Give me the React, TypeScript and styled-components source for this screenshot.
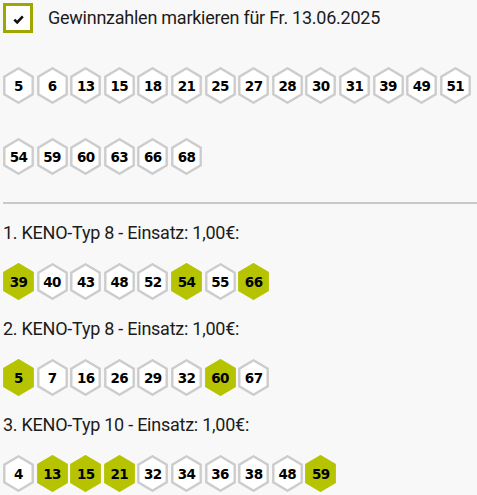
import React from "react";
import styled, { createGlobalStyle } from "styled-components";

const GlobalStyle = createGlobalStyle`
  html, body {
    margin: 0;
    padding: 0;
    background: #f8f8f8;
  }
  body {
    font-family: Roboto, "Noto Sans", sans-serif;
    color: #1c1c1c;
  }
`;

const Page = styled.div`
  display: flex;
  flex-direction: column;
  padding: 3px 0 0 3px;
  width: 474px;
`;

const CheckRow = styled.label`
  display: flex;
  align-items: center;
  gap: 15px;
  height: 30px;
`;

const CheckBox = styled.span`
  box-sizing: border-box;
  display: flex;
  align-items: center;
  justify-content: center;
  width: 30px;
  height: 30px;
  border: 3px solid #a0a600;
  background: #ffffff;
  padding-top: 2px;
`;

const Title = styled.span`
  font-size: 18px;
  line-height: 24px;
  letter-spacing: -0.25px;
`;

const HexRow = styled.div<{ $top: number }>`
  display: flex;
  flex-wrap: wrap;
  column-gap: 2.6px;
  row-gap: 34px;
  margin-top: ${({ $top }) => $top}px;
`;

const HexWrap = styled.div`
  position: relative;
  width: 31px;
  height: 37px;
  display: flex;
  align-items: center;
  justify-content: center;
`;

const HexShape = styled.svg`
  position: absolute;
  inset: 0;
`;

const HexLabel = styled.span`
  position: relative;
  font-family: "DejaVu Sans", sans-serif;
  font-weight: 700;
  font-size: 13.5px;
  letter-spacing: -0.6px;
  color: #000;
`;

const Divider = styled.hr`
  border: none;
  border-top: 2px solid #c8c8c8;
  margin: 27px 0 0 0;
  width: 474px;
`;

const Section = styled.section`
  display: flex;
  flex-direction: column;
  margin-top: 17px;
`;

const SectionTitle = styled.div`
  font-size: 18px;
  line-height: 24px;
  letter-spacing: -0.25px;
`;

const CheckMark = () => (
  <svg width="11" height="9" viewBox="0 0 11 9">
    <polyline
      points="1.3,4.6 4.2,7.4 9.8,1.4"
      fill="none"
      stroke="#111"
      strokeWidth="2.6"
      strokeLinecap="butt"
      strokeLinejoin="miter"
    />
  </svg>
);

type HexProps = { value: number; hit?: boolean };

const Hex: React.FC<HexProps> = ({ value, hit }) => (
  <HexWrap>
    <HexShape width="31" height="37" viewBox="0 0 31 37">
      <polygon
        points="15.5,1.3 29.7,9.6 29.7,27.4 15.5,35.7 1.3,27.4 1.3,9.6"
        fill={hit ? "#b6c300" : "#ffffff"}
        stroke={hit ? "#b6c300" : "#cccccc"}
        strokeWidth="2.4"
        strokeLinejoin="miter"
      />
    </HexShape>
    <HexLabel>{value}</HexLabel>
  </HexWrap>
);

const winning = [5, 6, 13, 15, 18, 21, 25, 27, 28, 30, 31, 39, 49, 51, 54, 59, 60, 63, 66, 68];

const tips = [
  { title: "1. KENO-Typ 8 - Einsatz: 1,00€:", numbers: [39, 40, 43, 48, 52, 54, 55, 66] },
  { title: "2. KENO-Typ 8 - Einsatz: 1,00€:", numbers: [5, 7, 16, 26, 29, 32, 60, 67] },
  { title: "3. KENO-Typ 10 - Einsatz: 1,00€:", numbers: [4, 13, 15, 21, 32, 34, 36, 38, 48, 59] },
];

const App: React.FC = () => (
  <>
    <GlobalStyle />
    <Page>
      <CheckRow>
        <CheckBox>
          <CheckMark />
        </CheckBox>
        <Title>Gewinnzahlen markieren für Fr. 13.06.2025</Title>
      </CheckRow>
      <HexRow $top={34}>
        {winning.map((n) => (
          <Hex key={n} value={n} />
        ))}
      </HexRow>
      <Divider />
      {tips.map((tip) => (
        <Section key={tip.title}>
          <SectionTitle>{tip.title}</SectionTitle>
          <HexRow $top={18}>
            {tip.numbers.map((n) => (
              <Hex key={n} value={n} hit={winning.includes(n)} />
            ))}
          </HexRow>
        </Section>
      ))}
    </Page>
  </>
);

export default App;
